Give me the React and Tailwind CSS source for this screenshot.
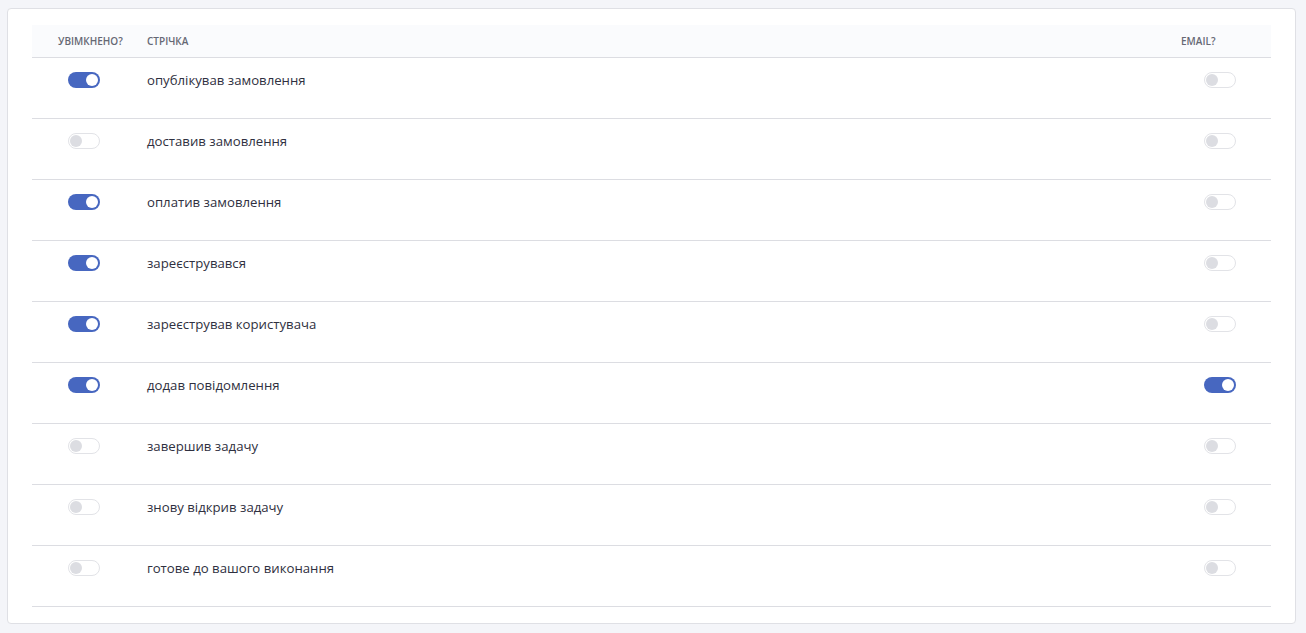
import React from "react";

const rows = [
  { label: "опублікував замовлення", on: true, email: false },
  { label: "доставив замовлення", on: false, email: false },
  { label: "оплатив замовлення", on: true, email: false },
  { label: "зареєструвався", on: true, email: false },
  { label: "зареєстрував користувача", on: true, email: false },
  { label: "додав повідомлення", on: true, email: true },
  { label: "завершив задачу", on: false, email: false },
  { label: "знову відкрив задачу", on: false, email: false },
  { label: "готове до вашого виконання", on: false, email: false },
];

const Toggle = ({ on }) =>
  on ? (
    <div className="flex h-4 w-8 items-center justify-end rounded-full bg-[#4767c0] pr-[2px]">
      <div className="h-3 w-3 rounded-full bg-white" />
    </div>
  ) : (
    <div className="flex h-4 w-8 items-center rounded-full border border-[#e2e3e7] bg-white pl-[1px]">
      <div className="h-3 w-3 rounded-full bg-[#dcdde2]" />
    </div>
  );

export default function App() {
  return (
    <div className="min-h-[633px] bg-[#f4f5f9] pl-[7px] pr-[10px] pt-[8px] pb-[9px] font-['Open_Sans','Noto_Sans',sans-serif]">
      <div className="rounded-[4px] border border-[#dfe0e5] bg-white px-6 pt-4 pb-4">
        <div className="grid grid-cols-[103px_1fr_111px] border-b border-[#dcdde2] bg-[#fafbfd] h-[33px] items-center text-[10px] font-semibold text-[#666874]">
          <div className="pl-[26px]">УВІМКНЕНО?</div>
          <div className="pl-3">СТРІЧКА</div>
          <div className="pl-[21px]">EMAIL?</div>
        </div>
        {rows.map((r, i) => (
          <div
            key={i}
            className="grid h-[61px] grid-cols-[103px_1fr_111px] border-b border-[#dcdde2] pt-[14px]"
          >
            <div className="pl-9">
              <Toggle on={r.on} />
            </div>
            <div className="pl-3 text-[13.2px] leading-4 text-[#2f3040]">{r.label}</div>
            <div className="pl-11">
              <Toggle on={r.email} />
            </div>
          </div>
        ))}
      </div>
    </div>
  );
}
